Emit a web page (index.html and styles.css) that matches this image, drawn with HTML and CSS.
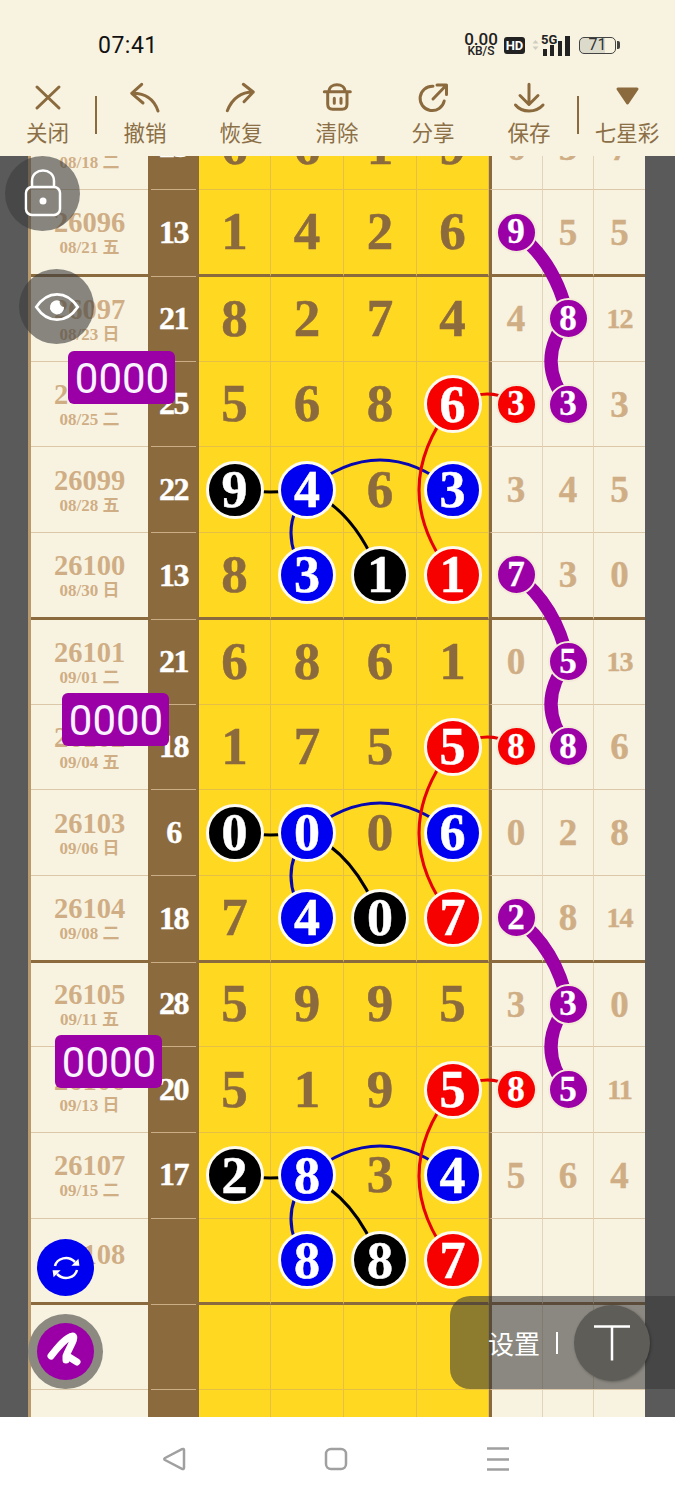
FILE: index.html
```html
<!DOCTYPE html>
<html lang="zh">
<head>
  <meta charset="UTF-8" />
  <meta name="viewport" content="width=device-width, initial-scale=1.0"/>
  <title>七星彩</title>
  <link rel="stylesheet" href="styles.css">
</head>
<body>
<div class="page">

  <header class="header">
    <div class="status">
      <div class="time">07:41</div>
      <div class="status-right">
        <div class="speed"><b>0.00</b><span>KB/S</span></div>
        <div class="hd">HD</div>
        <div class="net">
          <span class="net-arrows">
            <svg width="7" height="10" viewBox="0 0 7 10"><path d="M3.5 0L6.5 3.5H.5ZM3.5 10L.5 6.5H6.5Z" fill="#cfcdc2"/></svg>
          </span>
          <span class="net-5g">5G</span>
          <svg class="net-bars" width="27" height="20" viewBox="0 0 27 20">
            <rect x="0" y="13" width="4" height="7"/>
            <rect x="7" y="9" width="4" height="11"/>
            <rect x="15" y="5" width="4" height="15"/>
            <rect x="22" y="0" width="5" height="20"/>
          </svg>
        </div>
        <div class="battery"><div class="battery-body"><span>71</span></div><div class="battery-nub"></div></div>
      </div>
    </div>
    <nav class="toolbar">
      <div class="tool tool-first">
        <svg class="tool-icon" viewBox="0 0 36 32"><path d="M7 5L29 26M29 5L7 26"/></svg>
        <span>关闭</span>
      </div>
      <div class="tool-sep"></div>
      <div class="tool">
        <svg class="tool-icon" viewBox="0 0 36 32"><path d="M14.7 2.3L4.7 11.3L16 21M4.7 11.3C18 11 27 17 31 29"/></svg>
        <span>撤销</span>
      </div>
      <div class="tool">
        <svg class="tool-icon" viewBox="0 0 36 32"><path d="M20.3 2.3L30.3 10L21 19.7M30.3 10C18 10 9 17 4.3 28.7"/></svg>
        <span>恢复</span>
      </div>
      <div class="tool">
        <svg class="tool-icon" viewBox="0 0 36 32"><path d="M5.3 9.7H31.3M10 9.7C10 0.5 26 0.5 26 9.7M8.7 9.7V22.3C8.7 25.5 10.5 27.3 13.7 27.3H23C26.2 27.3 28 25.5 28 22.3V9.7M15.3 16.3V21.3M22 16.3V21.3"/></svg>
        <span>清除</span>
      </div>
      <div class="tool">
        <svg class="tool-icon" viewBox="0 0 36 32"><path d="M18 4.2A12.2 12.2 0 1 0 29.2 19M18 17L31.5 3M22 3H31.5V12.500"/></svg>
        <span>分享</span>
      </div>
      <div class="tool">
        <svg class="tool-icon" viewBox="0 0 36 32"><path d="M18 2.3V22M9 13.500L18 22.500L27 13.500M4.500 23C11 31 25 31 32 23"/></svg>
        <span>保存</span>
      </div>
      <div class="tool-sep"></div>
      <div class="tool tool-last">
        <svg class="tool-icon tool-icon-solid" viewBox="0 0 36 32"><path d="M9 7H28L18.500 21Z"/></svg>
        <span>七星彩</span>
      </div>
    </nav>
  </header>

  <main class="chart">
    <div class="rows">

      <div class="row">
        <div class="issue"><b>26095</b><span>08/18 二</span></div>
        <div class="sum">23</div>
        <div class="cell">6</div><div class="cell">6</div><div class="cell">1</div><div class="cell">9</div>
        <div class="side">6</div><div class="side">3</div><div class="side">7</div>
      </div>

      <div class="row end">
        <div class="issue"><b>26096</b><span>08/21 五</span></div>
        <div class="sum">13</div>
        <div class="cell">1</div><div class="cell">4</div><div class="cell">2</div><div class="cell">6</div>
        <div class="side"><span class="dot purple">9</span></div><div class="side">5</div><div class="side">5</div>
      </div>

      <div class="row">
        <div class="issue"><b>26097</b><span>08/23 日</span></div>
        <div class="sum">21</div>
        <div class="cell">8</div><div class="cell">2</div><div class="cell">7</div><div class="cell">4</div>
        <div class="side">4</div><div class="side"><span class="dot purple">8</span></div><div class="side small">12</div>
      </div>

      <div class="row">
        <div class="issue"><b>26098</b><span>08/25 二</span></div>
        <div class="sum">25</div>
        <div class="cell">5</div><div class="cell">6</div><div class="cell">8</div><div class="cell"><span class="ball red">6</span></div>
        <div class="side"><span class="dot red">3</span></div><div class="side"><span class="dot purple">3</span></div><div class="side">3</div>
      </div>

      <div class="row">
        <div class="issue"><b>26099</b><span>08/28 五</span></div>
        <div class="sum">22</div>
        <div class="cell"><span class="ball black">9</span></div><div class="cell"><span class="ball blue">4</span></div><div class="cell">6</div><div class="cell"><span class="ball blue">3</span></div>
        <div class="side">3</div><div class="side">4</div><div class="side">5</div>
      </div>

      <div class="row end">
        <div class="issue"><b>26100</b><span>08/30 日</span></div>
        <div class="sum">13</div>
        <div class="cell">8</div><div class="cell"><span class="ball blue">3</span></div><div class="cell"><span class="ball black">1</span></div><div class="cell"><span class="ball red">1</span></div>
        <div class="side"><span class="dot purple">7</span></div><div class="side">3</div><div class="side">0</div>
      </div>

      <div class="row">
        <div class="issue"><b>26101</b><span>09/01 二</span></div>
        <div class="sum">21</div>
        <div class="cell">6</div><div class="cell">8</div><div class="cell">6</div><div class="cell">1</div>
        <div class="side">0</div><div class="side"><span class="dot purple">5</span></div><div class="side small">13</div>
      </div>

      <div class="row">
        <div class="issue"><b>26102</b><span>09/04 五</span></div>
        <div class="sum">18</div>
        <div class="cell">1</div><div class="cell">7</div><div class="cell">5</div><div class="cell"><span class="ball red">5</span></div>
        <div class="side"><span class="dot red">8</span></div><div class="side"><span class="dot purple">8</span></div><div class="side">6</div>
      </div>

      <div class="row">
        <div class="issue"><b>26103</b><span>09/06 日</span></div>
        <div class="sum">6</div>
        <div class="cell"><span class="ball black">0</span></div><div class="cell"><span class="ball blue">0</span></div><div class="cell">0</div><div class="cell"><span class="ball blue">6</span></div>
        <div class="side">0</div><div class="side">2</div><div class="side">8</div>
      </div>

      <div class="row end">
        <div class="issue"><b>26104</b><span>09/08 二</span></div>
        <div class="sum">18</div>
        <div class="cell">7</div><div class="cell"><span class="ball blue">4</span></div><div class="cell"><span class="ball black">0</span></div><div class="cell"><span class="ball red">7</span></div>
        <div class="side"><span class="dot purple">2</span></div><div class="side">8</div><div class="side small">14</div>
      </div>

      <div class="row">
        <div class="issue"><b>26105</b><span>09/11 五</span></div>
        <div class="sum">28</div>
        <div class="cell">5</div><div class="cell">9</div><div class="cell">9</div><div class="cell">5</div>
        <div class="side">3</div><div class="side"><span class="dot purple">3</span></div><div class="side">0</div>
      </div>

      <div class="row">
        <div class="issue"><b>26106</b><span>09/13 日</span></div>
        <div class="sum">20</div>
        <div class="cell">5</div><div class="cell">1</div><div class="cell">9</div><div class="cell"><span class="ball red">5</span></div>
        <div class="side"><span class="dot red">8</span></div><div class="side"><span class="dot purple">5</span></div><div class="side small">11</div>
      </div>

      <div class="row">
        <div class="issue"><b>26107</b><span>09/15 二</span></div>
        <div class="sum">17</div>
        <div class="cell"><span class="ball black">2</span></div><div class="cell"><span class="ball blue">8</span></div><div class="cell">3</div><div class="cell"><span class="ball blue">4</span></div>
        <div class="side">5</div><div class="side">6</div><div class="side">4</div>
      </div>

      <div class="row end">
        <div class="issue issue-raised"><b>26108</b></div>
        <div class="sum"></div>
        <div class="cell"></div><div class="cell"><span class="ball blue">8</span></div><div class="cell"><span class="ball black">8</span></div><div class="cell"><span class="ball red">7</span></div>
        <div class="side"></div><div class="side"></div><div class="side"></div>
      </div>

      <div class="row">
        <div class="issue"></div><div class="sum"></div>
        <div class="cell"></div><div class="cell"></div><div class="cell"></div><div class="cell"></div>
        <div class="side"></div><div class="side"></div><div class="side"></div>
      </div>

      <div class="row">
        <div class="issue"></div><div class="sum"></div>
        <div class="cell"></div><div class="cell"></div><div class="cell"></div><div class="cell"></div>
        <div class="side"></div><div class="side"></div><div class="side"></div>
      </div>

    </div>

    <!-- lineas entre bolas, el grupo se repite cada 4 filas -->
    <svg class="links" width="675" height="1261" viewBox="0 156 675 1261">
      <defs>
        <g id="purpleLinks" class="link-purple">
          <path d="M516 232Q556 262 568 318"/>
          <path d="M568 318Q534 361 568 404"/>
        </g>
        <g id="mainLinks">
          <path class="link-blue" d="M307 490Q380 430 453 490"/>
          <path class="link-blue" d="M307 490Q275 533 307 576"/>
          <path class="link-red" d="M453 404Q385 490 453 576"/>
          <path class="link-red" d="M453 404Q490 384 516 404"/>
          <path class="link-black" d="M234 490Q270 494 307 490"/>
          <path class="link-black" d="M307 490Q355 510 380 576"/>
        </g>
      </defs>
      <use href="#purpleLinks"/>
      <use href="#purpleLinks" y="343"/>
      <use href="#purpleLinks" y="686"/>
      <use href="#mainLinks"/>
      <use href="#mainLinks" y="343"/>
      <use href="#mainLinks" y="686"/>
    </svg>
  </main>

  <footer class="navbar">
    <div class="nav-item">
      <svg width="24" height="24" viewBox="0 0 24 24"><path d="M22 3V21C22 22 21 22.300 20 21.800L3 13C2 12.400 2 11.600 3 11L20 2.200C21 1.700 22 2 22 3Z"/></svg>
    </div>
    <div class="nav-item">
      <svg width="24" height="24" viewBox="0 0 24 24"><rect x="2" y="2" width="20" height="20" rx="5"/></svg>
    </div>
    <div class="nav-item">
      <svg width="24" height="24" viewBox="0 0 24 24"><path d="M1 1.500H23M1 12.500H23M1 22.500H23"/></svg>
    </div>
  </footer>

  <!-- BOTONES FLOTANTES -->
  <div class="float-btn float-lock">
    <svg width="40" height="52" viewBox="0 0 40 52">
      <path d="M9 20V13C9 -1 31 -1 31 13V20" fill="none" stroke="#fff" stroke-width="2.500"/>
      <rect x="3" y="19" width="34" height="28" rx="6" fill="none" stroke="#fff" stroke-width="2.500"/>
      <circle cx="20" cy="33" r="3.500" fill="#fff"/>
    </svg>
  </div>
  <div class="float-btn float-eye">
    <svg width="46" height="32" viewBox="0 0 48 34">
      <path d="M2 17C14 -1 34 -1 46 17C34 35 14 35 2 17Z" fill="none" stroke="#fff" stroke-width="3"/>
      <path d="M27 10.500A7.500 7.500 0 1 0 31.500 17A5 5 0 0 1 27 10.500Z" fill="#fff"/>
    </svg>
  </div>

  <div class="code-tag code-tag-1">0000</div>
  <div class="code-tag code-tag-2">0000</div>
  <div class="code-tag code-tag-3">0000</div>

  <div class="sync-btn">
    <svg width="34" height="34" viewBox="0 0 34 34">
      <path d="M6 15C8 7 19 4 26 11M28 19C26 27 15 30 8 23" fill="none" stroke="#fff" stroke-width="2.500"/>
      <path d="M22 14L30 13L28 6ZM12 20L4 21L6 28Z" fill="#fff" transform="rotate(8 17 17)"/>
    </svg>
  </div>

  <div class="pen-btn">
    <div class="pen-inner">
      <svg width="56" height="56" viewBox="9 9 56 56">
        <path d="M23 42C30 33 38 23 45 22C48 24 42 32 38 42L38 46M41 43L49 48" fill="none" stroke="#fff" stroke-width="7" stroke-linecap="round" stroke-linejoin="round"/>
      </svg>
    </div>
  </div>

  <div class="settings">
    <span class="settings-label">设置</span>
    <span class="settings-sep"></span>
    <div class="settings-btn">
      <svg width="36" height="36" viewBox="0 0 36 36"><path d="M0 1.500H36M18 1.500V35.500" fill="none" stroke="#fff" stroke-width="2.500"/></svg>
    </div>
  </div>

</div>
</body>
</html>
```

FILE: styles.css
```css
* {
  box-sizing: border-box;
}

body {
  margin: 0;
  font-family: 'Liberation Serif', 'Noto Sans CJK SC', serif;
  background-color: #fff;
}

.page {
  position: relative;
  width: 675px;
  height: 1500px;
  display: flex;
  flex-direction: column;
  overflow: hidden;
}

/* CABECERA */
.header {
  height: 156px;
  background-color: #f8f3e1;
  font-family: 'Noto Sans CJK SC', sans-serif;
}

.status {
  height: 76px;
  padding: 14px 55px 0 98px;
  display: flex;
  align-items: center;
  justify-content: space-between;
}

.time {
  font-family: 'Roboto', sans-serif;
  font-size: 23px;
  letter-spacing: 0.5px;
  color: #111;
}

.status-right {
  display: flex;
  align-items: center;
  color: #222;
  font-family: 'Roboto', sans-serif;
}

.speed {
  width: 34px;
  display: flex;
  flex-direction: column;
  align-items: center;
}

.speed b {
  font-size: 17px;
  font-weight: 500;
  line-height: 13px;
}

.speed span {
  font-size: 12px;
  font-weight: 500;
  line-height: 11px;
}

.hd {
  width: 21px;
  height: 17px;
  margin-left: 6px;
  background-color: #222;
  border-radius: 3px;
  color: #fff;
  font-size: 13px;
  font-weight: 700;
  line-height: 17px;
  text-align: center;
}

.net {
  position: relative;
  width: 40px;
  height: 21px;
  margin-left: 5px;
}

.net-arrows {
  position: absolute;
  left: 2px;
  top: 0;
}

.net-5g {
  position: absolute;
  left: 11px;
  top: -2px;
  font-size: 13px;
  font-weight: 700;
  line-height: 14px;
}

.net-bars {
  position: absolute;
  left: 13px;
  top: 1px;
  fill: #222;
}

.battery {
  margin-left: 9px;
  display: flex;
  align-items: center;
  gap: 1px;
}

.battery-body {
  width: 37px;
  height: 17px;
  border: 1.5px solid #444;
  border-radius: 5px;
  background: linear-gradient(90deg, #dcdacb 71%, transparent 71%);
  font-size: 16px;
  line-height: 14px;
  text-align: center;
  color: #333;
}

.battery-nub {
  width: 3px;
  height: 8px;
  background-color: #444;
  border-radius: 0 2px 2px 0;
}

.toolbar {
  height: 80px;
  display: flex;
  color: #8b6f47;
}

.tool {
  width: 96px;
  padding-top: 6px;
  display: flex;
  flex-direction: column;
  align-items: center;
  font-size: 21.500px;
  line-height: 26px;
}

.tool-first {
  width: 95px;
}

.tool-last {
  flex: 1;
  width: auto;
}

.tool-icon {
  width: 36px;
  height: 32px;
  margin-bottom: 5px;
  fill: none;
  stroke: #8b6a3e;
  stroke-width: 3;
  stroke-linecap: round;
  stroke-linejoin: round;
}

.tool-icon-solid {
  fill: #8b6a3e;
}

.tool-sep {
  width: 2px;
  height: 38px;
  margin-top: 20px;
  flex-shrink: 0;
  background-color: #8b6a3e;
}

/* TABLA */
.chart {
  position: relative;
  height: 1261px;
  background-color: #5a5a5a;
  overflow: hidden;
}

.rows {
  margin: -51.300px 30px 0 28px;
  border-left: 3px solid #b99a6c;
}

.row {
  height: 85.700px;
  display: grid;
  grid-template-columns: 117px 51px 72px 73px 73px 72px 54px 51px 51px;
}

.row.end {
  height: 86.700px;
}

.row.end + .row {
  height: 84.700px;
}

.issue,
.cell,
.side {
  border-bottom: 1px solid #dcc7a8;
}

.issue,
.side {
  background-color: #f8f3e1;
  color: #d0ae85;
}

.issue {
  padding-top: 3px;
  display: flex;
  flex-direction: column;
  align-items: center;
  justify-content: center;
  font-weight: bold;
}

.issue b {
  font-size: 28.500px;
  line-height: 29px;
}

.issue span {
  font-size: 17px;
  line-height: 22px;
}

.issue-raised {
  padding-bottom: 14px;
}

.sum {
  display: flex;
  align-items: center;
  justify-content: center;
  padding-bottom: 2px;
  background: linear-gradient(#cbad86, #cbad86) center bottom / 45px 1px no-repeat #8b6a3e;
  color: #fff;
  font-size: 32px;
  font-weight: bold;
  letter-spacing: -1.500px;
  -webkit-text-stroke: 0.4px #fff;
}

.cell {
  display: flex;
  align-items: center;
  justify-content: center;
  padding-bottom: 2px;
  background-color: #ffd821;
  border-bottom-color: #e6c044;
  border-right: 1px solid #e6c044;
  color: #8b6a3e;
  font-size: 53px;
  font-weight: bold;
  -webkit-text-stroke: 0.5px #8b6a3e;
}

.side {
  display: flex;
  align-items: center;
  justify-content: center;
  border-right: 1px solid #e3d4b8;
  font-size: 37px;
  font-weight: bold;
  -webkit-text-stroke: 0.4px #d0ae85;
}

.side.small {
  font-size: 28px;
  letter-spacing: -1px;
}

.cell + .side {
  padding-right: 2px;
  border-left: 3px solid #8b6a3e;
}

.side:last-child {
  border-right: none;
}

.row.end .issue,
.row.end .cell,
.row.end .side {
  border-bottom: 3px solid #8b6a3e;
}

.ball {
  position: relative;
  z-index: 2;
  width: 58px;
  height: 58px;
  margin-top: 2px;
  flex-shrink: 0;
  display: flex;
  align-items: center;
  justify-content: center;
  border: 3px solid #fdfbf0;
  border-radius: 50%;
  color: #fff;
  font-size: 52px;
  -webkit-text-stroke: 0.5px #fff;
}

.dot {
  position: relative;
  z-index: 2;
  width: 41px;
  height: 41px;
  flex-shrink: 0;
  display: flex;
  align-items: center;
  justify-content: center;
  border: 2.500px solid #f3ead8;
  border-radius: 50%;
  color: #fff;
  font-size: 35px;
  -webkit-text-stroke: 0.3px #fff;
}

.red { background-color: #f70000; }
.blue { background-color: #0000f0; }
.black { background-color: #000; }
.purple { background-color: #9a00a6; }

/* LINEAS */
.links {
  position: absolute;
  left: 0;
  top: 0;
  z-index: 1;
  fill: none;
}

.link-purple { stroke: #9a00a6; stroke-width: 13; }
.link-blue { stroke: #0808b0; stroke-width: 3; }
.link-red { stroke: #e60000; stroke-width: 3; }
.link-black { stroke: #000; stroke-width: 3; }

/* BARRA INFERIOR */
.navbar {
  height: 83px;
  padding-left: 93px;
  display: grid;
  grid-template-columns: repeat(3, 162px);
  background-color: #fff;
}

.nav-item {
  display: flex;
  align-items: center;
  justify-content: center;
}

.nav-item svg {
  fill: none;
  stroke: #a0a0a0;
  stroke-width: 2.500;
  stroke-linejoin: round;
}

/* FLOTANTES */
.float-btn {
  position: absolute;
  z-index: 5;
  width: 75px;
  height: 75px;
  display: flex;
  align-items: center;
  justify-content: center;
  border-radius: 50%;
  background-color: rgba(60, 60, 60, 0.6);
}

.float-lock {
  left: 5px;
  top: 156px;
}

.float-eye {
  left: 19px;
  top: 269px;
}

.code-tag {
  position: absolute;
  z-index: 5;
  width: 107px;
  height: 53px;
  padding-left: 1px;
  background-color: #9a00a6;
  border-radius: 6px;
  color: #f8f3ff;
  font-family: 'Roboto', sans-serif;
  font-size: 42px;
  line-height: 55px;
  text-align: center;
}

.code-tag-1 { left: 68px; top: 351px; }
.code-tag-2 { left: 62px; top: 693px; }
.code-tag-3 { left: 55px; top: 1035px; }

.sync-btn {
  position: absolute;
  z-index: 5;
  left: 37px;
  top: 1239px;
  width: 57px;
  height: 57px;
  display: flex;
  align-items: center;
  justify-content: center;
  border-radius: 50%;
  background-color: #0000f0;
}

.pen-btn {
  position: absolute;
  z-index: 5;
  left: 28px;
  top: 1314px;
  width: 75px;
  height: 75px;
  padding: 9px;
  border-radius: 50%;
  background-color: #8b8980;
}

.pen-inner {
  width: 57px;
  height: 57px;
  border-radius: 50%;
  background-color: #9a00a6;
}

.settings {
  position: absolute;
  z-index: 5;
  left: 450px;
  top: 1296px;
  width: 225px;
  height: 93px;
  padding-left: 38px;
  display: flex;
  align-items: center;
  border-radius: 20px 0 0 20px;
  background-color: rgba(54, 54, 54, 0.57);
}

.settings-label {
  font-family: 'Noto Sans CJK SC', sans-serif;
  font-size: 26px;
  color: #fff;
}

.settings-sep {
  width: 2px;
  height: 22px;
  margin-left: 16px;
  background-color: #fff;
}

.settings-btn {
  width: 76px;
  height: 76px;
  margin-left: 16px;
  display: flex;
  align-items: center;
  justify-content: center;
  border-radius: 50%;
  background-color: #5f5d58;
  box-shadow: 1px 1px 3px rgba(0, 0, 0, 0.3);
}
```
